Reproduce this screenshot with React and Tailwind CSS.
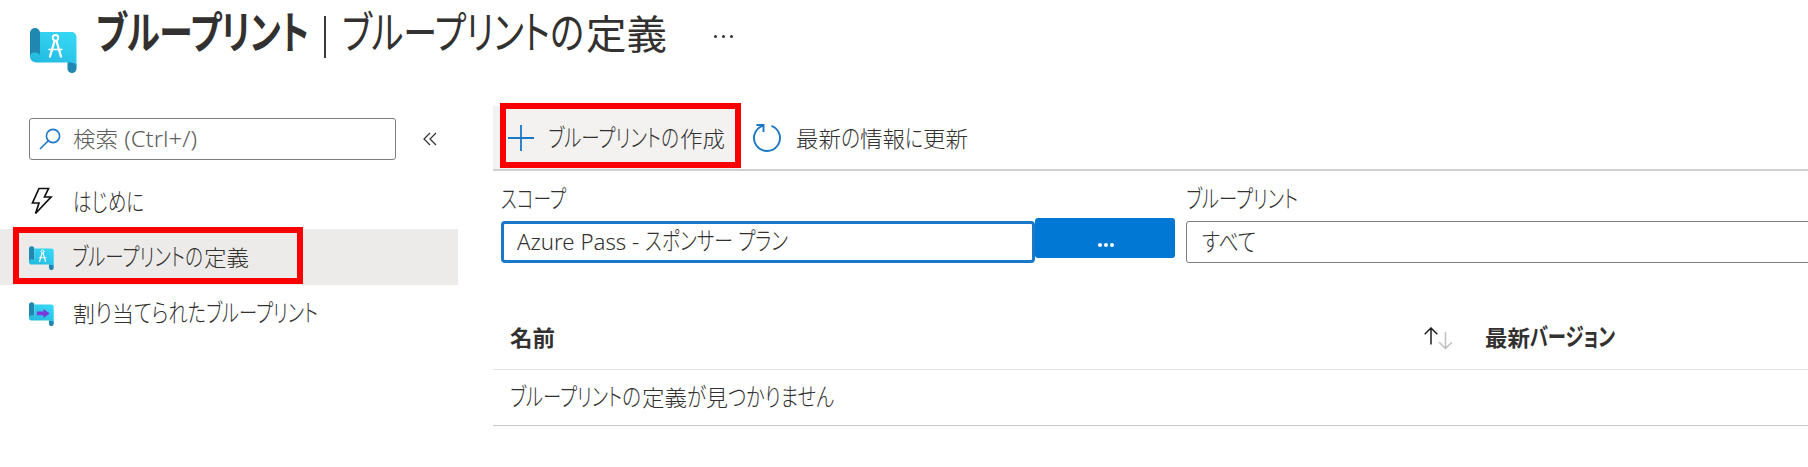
import { useId, useLayoutEffect, useRef } from "react";

// One run of text, condensed or widened horizontally to a given width.
function Run({ text, w, kana, gap = 0 }) {
  const ref = useRef(null);
  useLayoutEffect(() => {
    const el = ref.current;
    const fit = () => {
      el.style.transform = "none";
      const natural = el.getBoundingClientRect().width;
      if (natural) el.style.transform = `scaleX(${w / natural})`;
    };
    fit();
    document.fonts?.ready.then(fit);
  }, [w, text]);
  return (
    <span className="inline-block" style={{ width: w, marginLeft: gap }}>
      <span ref={ref} className={`inline-block origin-left whitespace-pre ${kana ? "text-[1.12em]" : ""}`}>
        {text}
      </span>
    </span>
  );
}

function Label({ runs, className = "" }) {
  return (
    <span className={`block shrink-0 whitespace-nowrap [font-feature-settings:'palt'] ${className}`}>
      {runs.map(([text, w, kana, gap], i) => (
        <Run key={i} text={text} w={w} kana={kana} gap={gap} />
      ))}
    </span>
  );
}

function Blueprint({ kind, className }) {
  const id = useId();
  return (
    <svg viewBox="0 0 47 46" className={className}>
      <defs>
        <linearGradient id={id} x1="0" y1="1" x2="0.6" y2="0">
          <stop offset="0" stopColor="#1fb4dc" />
          <stop offset="1" stopColor="#35d5f4" />
        </linearGradient>
      </defs>
      <path d="M0 5a5 5 0 0 1 10 0v24H0z" fill="#1f87b0" />
      <path d="M37.500 34H42l4.500 2v4.500a4.500 4.500 0 0 1-9 0z" fill="#1f87b0" />
      <path d="M10 4h31.500a5 5 0 0 1 5 5v31c0-3.500-2-5.500-5-5.500H6a6 6 0 0 1-6-6c0-2.500 2-4 5-4 2 0 5 1 5 3z" fill={`url(#${id})`} />
      {kind === "arrow" ? (
        <path d="M15 17.500h12v-5l12 8.500-12 8.500v-5H15z" fill="#7a3bd6" />
      ) : (
        <g fill="none" stroke="#fff" strokeLinecap="round">
          <circle cx="25.500" cy="9.800" r="2.800" strokeWidth="1.800" />
          <path d="M24.500 13 20 28.500M26.500 13l4.500 15.500" strokeWidth="2.300" />
          <path d="M19 21.500h13" strokeWidth="1.600" />
        </g>
      )}
    </svg>
  );
}

const BP = "ブループリント";

export default function App() {
  return (
    <div className="h-[467px] w-[1808px] overflow-hidden bg-white font-['Noto_Sans','Noto_Sans_CJK_JP',sans-serif] text-[22px] leading-[30px] font-light text-[#323130]">
      <header className="flex h-[103px] items-start pl-[30px]">
        <Blueprint className="mt-[28px] h-[46px] w-[47px]" />
        <h1 className="ml-[19px] flex h-[66px] items-center text-[40px] leading-[64px]">
          <Label className="font-semibold" runs={[[BP, 213, true]]} />
          <span className="mt-[10px] mb-[2px] ml-[15px] h-[42px] w-[2px] bg-[#3b3a39]" />
          <Label className="ml-[16px] font-normal" runs={[[BP, 208, true], ["の", 34, true], ["定義", 81, false, 2]]} />
        </h1>
        <span className="mt-[35px] ml-[47px] flex gap-[5px]">
          <i className="size-[3px] rounded-full bg-[#323130]" />
          <i className="size-[3px] rounded-full bg-[#323130]" />
          <i className="size-[3px] rounded-full bg-[#323130]" />
        </span>
      </header>

      <div className="flex">
        <aside className="w-[458px] shrink-0 pt-[15px]">
          <div className="ml-[29px] flex items-center">
            <div className="flex h-[42px] w-[367px] items-center rounded-[3px] border border-[#7f7d7b] pl-[9px]">
              <svg viewBox="0 0 22 22" className="size-[22px]" fill="none" stroke="#1b78c8" strokeWidth="1.600">
                <circle cx="14" cy="8" r="6.600" />
                <path d="M9.300 12.700 1 21" />
              </svg>
              <Label className="mb-[2px] ml-[12px] text-[#605e5c]" runs={[["検索", 45], [" (Ctrl+/)", 79]]} />
            </div>
            <svg viewBox="0 0 14 14" className="ml-[27px] size-[14px]" fill="none" stroke="#323130" strokeWidth="1.200">
              <path d="M7 1 1 7l6 6M13 1 7 7l6 6" />
            </svg>
          </div>

          <nav className="mt-[13px]">
            <div className="flex h-[56px] items-center pl-[31px]">
              <svg viewBox="0 0 22 28" className="h-[28px] w-[22px]" fill="none" stroke="#111" strokeWidth="1.700">
                <path d="M8 1.500h9.500L13.500 10H20L4.500 26.500 8 16H1.500z" />
              </svg>
              <Label className="mt-[1px] ml-[20px]" runs={[["はじめに", 71, true]]} />
            </div>
            <div className="relative flex h-[56px] items-center bg-[#edebe9] pl-[29px]">
              <Blueprint className="mt-[2px] h-[25px] w-[25px]" />
              <Label className="ml-[18px]" runs={[[BP, 113, true], ["の", 18, true], ["定義", 45, false, 1]]} />
              <div className="absolute -top-[2px] left-[13px] h-[57px] w-[290px] border-[6px] border-[#fb0000]" />
            </div>
            <div className="flex h-[56px] items-center pl-[29px]">
              <Blueprint kind="arrow" className="mt-[2px] h-[25px] w-[25px]" />
              <Label
                className="ml-[19px]"
                runs={[["割", 22], ["り", 17, true], ["当", 22], ["てられた", 72, true], [BP, 112, true]]}
              />
            </div>
          </nav>
        </aside>

        <main className="ml-[35px] w-[1315px] shrink-0 pt-[3px]">
          <div className="flex h-[65px] border-b-2 border-[#d2d0ce]">
            <div className="relative flex w-[247px] items-center bg-[#f3f2f1] pl-[15px]">
              <svg viewBox="0 0 26 26" className="size-[26px]" stroke="#1b78c8" strokeWidth="1.800">
                <path d="M13 0v26M0 13h26" />
              </svg>
              <Label className="mt-[1px] ml-[14px]" runs={[[BP, 113, true], ["の", 18, true], ["作成", 45, false, 1]]} />
              <div className="absolute -top-[3px] left-[7px] h-[65px] w-[241px] border-[6px] border-[#fb0000]" />
            </div>
            <div className="flex items-center pl-[13px]">
              <svg viewBox="0 0 28 28" className="size-[28px]" fill="none" stroke="#1b78c8" strokeWidth="1.900">
                <path d="M18.500 1.800A13 13 0 1 1 9.500 1.800M3.500 1h7v7" />
              </svg>
              <Label
                className="ml-[15px]"
                runs={[["最新", 45], ["の", 19, true], ["情報", 45], ["に", 18, true], ["更新", 45]]}
              />
            </div>
          </div>

          <div className="flex pt-[12px]">
            <div className="w-[541px] pl-[8px]">
              <Label className="h-[35px] pt-[1px]" runs={[["スコープ", 65, true]]} />
              <div className="mt-[3px] flex h-[42px] w-[534px] items-center rounded-[4px] border-[3px] border-[#1a78c8] pl-[13px]">
                <Label
                  className="mb-[3px] [&>span:first-child]:font-[350]"
                  runs={[["Azure Pass - ", 128], ["スポンサー", 88, true], ["プラン", 50, true, 5]]}
                />
              </div>
            </div>
            <div className="pt-[35px]">
              <div className="ml-[1px] flex h-[40px] w-[140px] items-end justify-center gap-[2px] rounded-[3px] bg-[#0078d4] pb-[11px] pl-[2px]">
                <i className="size-[4px] rounded-full bg-white" />
                <i className="size-[4px] rounded-full bg-white" />
                <i className="size-[4px] rounded-full bg-white" />
              </div>
            </div>
            <div className="ml-[11px] flex-1">
              <Label className="h-[35px] pt-[1px]" runs={[[BP, 112, true]]} />
              <div className="mt-[3px] flex h-[42px] w-[640px] items-center rounded-[3px] border border-[#7f7d7b] pl-[15px]">
                <Label runs={[["すべて", 54, true]]} />
              </div>
            </div>
          </div>

          <div className="mt-[43px]">
            <div className="flex h-[64px] items-center border-b border-[#e3e3e3] pl-[17px] font-semibold">
              <Label className="mb-[2px] w-[914px]" runs={[["名前", 45]]} />
              <svg viewBox="0 0 28 23" className="mt-[2px] h-[23px] w-[28px]" fill="none" strokeWidth="1.500">
                <path d="M7 17.500V1M.7 7.200 7 1l6.300 6.200" stroke="#201f1e" />
                <path d="M21.500 5v16.500M15.200 15.300l6.300 6.200 6.300-6.200" stroke="#c0bfbe" />
              </svg>
              <Label className="mb-[1px] ml-[33px]" runs={[["最新", 45], ["バージョン", 85, true]]} />
            </div>
            <div className="flex h-[56px] items-center border-b border-[#c8c6c4] pl-[17px]">
              <Label
                className="mb-[2px]"
                runs={[
                  [BP, 112, true],
                  ["の", 19, true],
                  ["定義", 45, false, 1],
                  ["が", 19, true],
                  ["見", 22],
                  ["つかりません", 106, true],
                ]}
              />
            </div>
          </div>
        </main>
      </div>
    </div>
  );
}
